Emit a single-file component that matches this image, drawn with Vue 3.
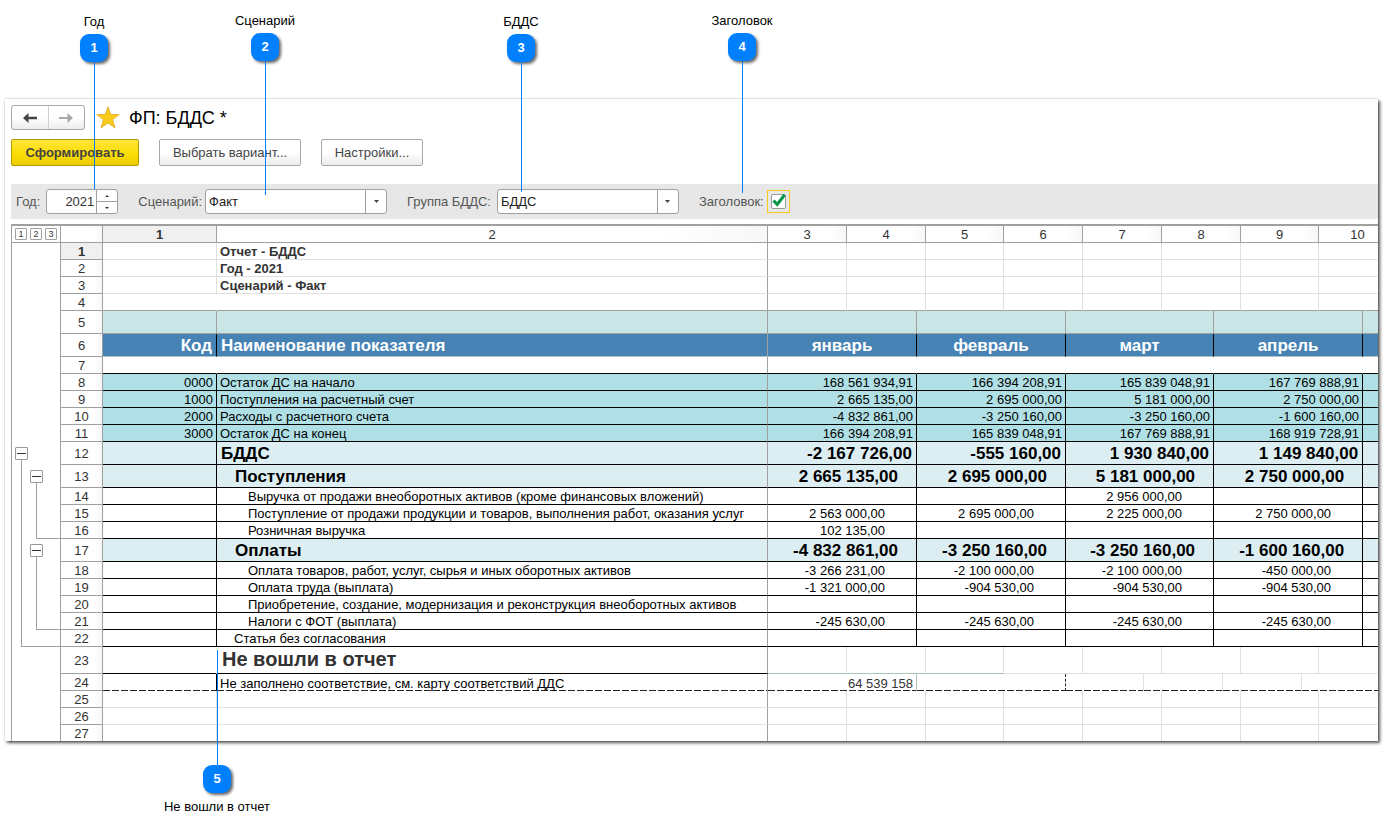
<script setup>
import { computed, ref } from 'vue'

const year = ref('2021')
const scenario = ref('Факт')
const group = ref('БДДС')
const showTitle = ref(true)

const stepYear = (delta) => {
  year.value = String(Number(year.value) + delta)
}

const callouts = [
  { id: 1, label: 'Год', x: 94, y: 14, line: 127 },
  { id: 2, label: 'Сценарий', x: 265, y: 13, line: 134 },
  { id: 3, label: 'БДДС', x: 521, y: 14, line: 130 },
  { id: 4, label: 'Заголовок', x: 742, y: 13, line: 132 },
  { id: 5, label: 'Не вошли в отчет', x: 217, y: 650, line: 115, below: true },
]

// Column tracks: sheet columns 3–10 and the month blocks share one set of edges.
const tracks = [42, 114, 551, 79, 70, 9, 78, 62, 17, 61, 18, 52, 9, 18, 61, 17, 44]
const columns = [
  { n: 3, span: 1 },
  { n: 4, span: 2 },
  { n: 5, span: 1 },
  { n: 6, span: 2 },
  { n: 7, span: 2 },
  { n: 8, span: 3 },
  { n: 9, span: 2 },
  { n: 10, span: 2 },
]
const plainSpans = columns.map((c) => c.span)
const monthSpans = [2, 3, 4, 5, 1]
const noteSpans = [2, 3, 2, 3, 2, 3]

const row = (n, kind, name = '', values = [], code = '') => {
  const spans = ['title', 'gap', 'missed', 'empty', 'empty last'].includes(kind)
    ? plainSpans
    : kind === 'note'
      ? noteSpans
      : monthSpans
  return { n, kind, name, code, cells: spans.map((span, i) => ({ span, text: values[i] || '' })) }
}

const rows = [
  row(1, 'title', 'Отчет - БДДС'),
  row(2, 'title', 'Год - 2021'),
  row(3, 'title', 'Сценарий - Факт'),
  row(4, 'gap'),
  row(5, 'band'),
  row(6, 'head', 'Наименование показателя', ['январь', 'февраль', 'март', 'апрель'], 'Код'),
  row(7, 'blank'),
  row(8, 'total', 'Остаток ДС на начало', ['168 561 934,91', '166 394 208,91', '165 839 048,91', '167 769 888,91'], '0000'),
  row(9, 'total', 'Поступления на расчетный счет', ['2 665 135,00', '2 695 000,00', '5 181 000,00', '2 750 000,00'], '1000'),
  row(10, 'total', 'Расходы с расчетного счета', ['-4 832 861,00', '-3 250 160,00', '-3 250 160,00', '-1 600 160,00'], '2000'),
  row(11, 'total', 'Остаток ДС на конец', ['166 394 208,91', '165 839 048,91', '167 769 888,91', '168 919 728,91'], '3000'),
  row(12, 'group', 'БДДС', ['-2 167 726,00', '-555 160,00', '1 930 840,00', '1 149 840,00']),
  row(13, 'subgroup', 'Поступления', ['2 665 135,00', '2 695 000,00', '5 181 000,00', '2 750 000,00']),
  row(14, 'item', 'Выручка от продажи внеоборотных активов (кроме финансовых вложений)', ['', '', '2 956 000,00', '']),
  row(15, 'item', 'Поступление от продажи продукции и товаров, выполнения работ, оказания услуг', ['2 563 000,00', '2 695 000,00', '2 225 000,00', '2 750 000,00']),
  row(16, 'item', 'Розничная выручка', ['102 135,00']),
  row(17, 'subgroup', 'Оплаты', ['-4 832 861,00', '-3 250 160,00', '-3 250 160,00', '-1 600 160,00']),
  row(18, 'item', 'Оплата товаров, работ, услуг, сырья и иных оборотных активов', ['-3 266 231,00', '-2 100 000,00', '-2 100 000,00', '-450 000,00']),
  row(19, 'item', 'Оплата труда (выплата)', ['-1 321 000,00', '-904 530,00', '-904 530,00', '-904 530,00']),
  row(20, 'item', 'Приобретение, создание, модернизация и реконструкция внеоборотных активов'),
  row(21, 'item', 'Налоги с ФОТ (выплата)', ['-245 630,00', '-245 630,00', '-245 630,00', '-245 630,00']),
  row(22, 'item outer', 'Статья без согласования'),
  row(23, 'missed', 'Не вошли в отчет'),
  row(24, 'note', 'Не заполнено соответствие, см. карту соответствий ДДС', ['64 539 158']),
  row(25, 'empty'),
  row(26, 'empty'),
  row(27, 'empty last'),
]

const heights = { band: 23, head: 23, group: 23, subgroup: 23, missed: 27 }
const heightOf = (r) => heights[r.kind] || 17
const bottomOf = (n) => rows.slice(0, n).reduce((sum, r) => sum + heightOf(r), 0)

const brackets = computed(() =>
  [
    { from: 12, to: 22, level: 0 },
    { from: 13, to: 16, level: 1 },
    { from: 17, to: 21, level: 1 },
  ].map((b) => ({
    ...b,
    left: 3 + b.level * 15,
    top: bottomOf(b.from) - 18,
    height: bottomOf(b.to) - bottomOf(b.from) + 18,
  })),
)
</script>

<template>
  <main class="stage">
    <section class="window">
      <header class="titlebar">
        <div class="nav">
          <button type="button" aria-label="Назад">
            <svg width="14" height="10" viewBox="0 0 14 10"><path d="M0 5L5.5 0V3.8H14V6.2H5.5V10Z" fill="#444" /></svg>
          </button>
          <button type="button" aria-label="Вперед">
            <svg width="14" height="10" viewBox="0 0 14 10"><path d="M14 5L8.5 0V4H0V6H8.5V10Z" fill="#aaa" /></svg>
          </button>
        </div>
        <svg class="star" width="24" height="23" viewBox="0 0 24 23"><path d="M12 1L14.8 8.6H23.2L16.6 13.6L19 21.8L12 17L5 21.8L7.4 13.6L0.8 8.6H9.2Z" fill="#f9cb1c" stroke="#e5b52a" stroke-width="1" /></svg>
        <h1>ФП: БДДС *</h1>
      </header>

      <div class="actions">
        <button type="button" class="btn primary">Сформировать</button>
        <button type="button" class="btn variant">Выбрать вариант...</button>
        <button type="button" class="btn settings">Настройки...</button>
      </div>

      <form class="filters" @submit.prevent>
        <div class="field">
          <label for="year">Год:</label>
          <div class="box year">
            <input id="year" v-model="year" type="text" inputmode="numeric" />
            <div class="stepper">
              <button type="button" aria-label="Больше" @click="stepYear(1)"><svg width="4" height="2" viewBox="0 0 4 2"><path d="M0 2L2 0L4 2Z" fill="#333" /></svg></button>
              <button type="button" aria-label="Меньше" @click="stepYear(-1)"><svg width="4" height="2" viewBox="0 0 4 2"><path d="M0 0L2 2L4 0Z" fill="#333" /></svg></button>
            </div>
          </div>
        </div>
        <div class="field tight">
          <label for="scenario">Сценарий:</label>
          <div class="box combo">
            <select id="scenario" v-model="scenario"><option>Факт</option></select>
            <span class="drop"><svg width="5" height="3" viewBox="0 0 5 3"><path d="M0 0H5L2.5 3Z" fill="#444" /></svg></span>
          </div>
        </div>
        <div class="field">
          <label for="group">Группа БДДС:</label>
          <div class="box combo">
            <select id="group" v-model="group"><option>БДДС</option></select>
            <span class="drop"><svg width="5" height="3" viewBox="0 0 5 3"><path d="M0 0H5L2.5 3Z" fill="#444" /></svg></span>
          </div>
        </div>
        <div class="field tight">
          <label for="show-title">Заголовок:</label>
          <div class="check">
            <input id="show-title" v-model="showTitle" type="checkbox" />
            <svg v-if="showTitle" width="17" height="15" viewBox="0 0 17 15"><path d="M3.5 6.5L7.2 10.5L14.5 1" fill="none" stroke="#009646" stroke-width="3" /></svg>
          </div>
        </div>
      </form>

      <div class="sheet">
        <aside class="outline">
          <div class="levels">
            <button v-for="n in 3" :key="n" type="button">{{ n }}</button>
          </div>
          <div class="tree">
            <div
              v-for="b in brackets"
              :key="b.from"
              class="bracket"
              :style="{ left: b.left + 'px', top: b.top + 'px', height: b.height + 'px' }"
            >
              <button type="button" aria-label="Свернуть"></button>
              <span class="rail"></span>
            </div>
          </div>
        </aside>

        <div class="grid">
          <table>
            <colgroup>
              <col v-for="(w, i) in tracks" :key="i" :style="{ width: w + 'px' }" />
              <col />
            </colgroup>
            <thead>
              <tr>
                <th></th>
                <th class="current">1</th>
                <th>2</th>
                <th v-for="c in columns" :key="c.n" :colspan="c.span">{{ c.n }}</th>
              </tr>
            </thead>
            <tbody>
              <tr v-for="r in rows" :key="r.n" :class="r.kind">
                <th scope="row" :class="{ current: r.n === 1 }">{{ r.n }}</th>
                <td class="code">{{ r.code }}</td>
                <td class="name">{{ r.name }}</td>
                <td v-for="(c, i) in r.cells" :key="i" class="value" :colspan="c.span">{{ c.text }}</td>
              </tr>
            </tbody>
          </table>
        </div>
      </div>
    </section>

    <div
      v-for="c in callouts"
      :key="c.id"
      class="callout"
      :class="{ below: c.below }"
      :style="{ left: c.x - 60 + 'px', top: c.y + 'px' }"
    >
      <span class="caption">{{ c.label }}</span>
      <span class="badge">{{ c.id }}</span>
      <span class="line" :style="{ height: c.line + 'px' }"></span>
    </div>
  </main>
</template>

<style>
body {
  margin: 0;
  background: #fff;
}
</style>

<style scoped>
.stage {
  position: relative;
  box-sizing: border-box;
  min-height: 100vh;
  padding: 99px 9px 88px 5px;
  overflow: hidden;
  font-family: "Liberation Sans", Arial, sans-serif;
  font-size: 13px;
  color: #333;
}

button,
input,
select {
  margin: 0;
  padding: 0;
  border: 0;
  background: none;
  font: inherit;
  color: inherit;
}

svg {
  display: block;
}

.window {
  padding: 6px 0 0 6px;
  background: #fff;
  box-shadow: 0 0 2px rgba(0, 0, 0, 0.25), 2px 2px 3px rgba(0, 0, 0, 0.65);
}

.titlebar {
  display: flex;
  align-items: center;
  height: 25px;
}

.nav {
  display: flex;
  box-sizing: border-box;
  width: 74px;
  height: 25px;
  border: 1px solid #a8a8a8;
  border-radius: 3px;
  background: linear-gradient(#fff 50%, #ececec);
}

.nav button {
  display: flex;
  flex: 1;
  align-items: center;
  justify-content: center;
}

.nav button + button {
  border-left: 1px solid #d0d0d0;
}

.star {
  margin-left: 11px;
}

h1 {
  margin: 0 0 0 9px;
  font-size: 18px;
  font-weight: 400;
  line-height: 24px;
  color: #000;
}

.actions {
  display: flex;
  gap: 20px;
  margin-top: 9px;
}

.btn {
  box-sizing: border-box;
  height: 27px;
  border: 1px solid #a8a8a8;
  border-radius: 2px;
  background: linear-gradient(#fff 50%, #ececec);
  color: #444;
}

.primary {
  width: 128px;
  border-color: #b09a00;
  background: linear-gradient(#ffe63a, #fbdc00 60%, #eccb00);
  font-weight: 700;
}

.variant {
  width: 142px;
}

.settings {
  width: 102px;
}

.filters {
  display: flex;
  align-items: center;
  gap: 20px;
  height: 35px;
  margin-top: 18px;
  padding-left: 5px;
  background: #e7e7e7;
}

.field {
  display: flex;
  align-items: center;
  gap: 6px;
}

.tight {
  gap: 3px;
}

.field label {
  color: #555;
}

.box {
  box-sizing: border-box;
  height: 25px;
  border: 1px solid #a0a0a0;
  border-radius: 3px;
  background: #fff;
}

.year {
  display: flex;
  width: 72px;
}

.year input {
  width: 49px;
  padding-right: 2px;
  box-sizing: border-box;
  text-align: right;
}

.stepper {
  display: flex;
  flex: 1;
  flex-direction: column;
  border-left: 1px solid #a0a0a0;
}

.stepper button {
  display: flex;
  flex: 1;
  align-items: center;
  justify-content: center;
}

.stepper button + button {
  border-top: 1px solid #a0a0a0;
}

.combo {
  display: grid;
  grid-template-columns: 1fr 21px;
  width: 182px;
}

.combo select {
  grid-area: 1 / 1 / 2 / 3;
  padding-left: 3px;
  appearance: none;
  color: #222;
}

.drop {
  display: flex;
  grid-area: 1 / 2 / 2 / 3;
  align-items: center;
  justify-content: center;
  border-left: 1px solid #a0a0a0;
  pointer-events: none;
}

.check {
  display: grid;
  box-sizing: border-box;
  width: 23px;
  height: 23px;
  place-items: center;
  border: 1px solid #fbc91c;
}

.check input {
  grid-area: 1 / 1;
  box-sizing: border-box;
  width: 15px;
  height: 15px;
  border: 1px solid #999;
  border-radius: 2px;
  background: #fff;
  appearance: none;
}

.check svg {
  grid-area: 1 / 1;
  pointer-events: none;
}

.sheet {
  display: flex;
  margin-top: 5px;
  border-top: 2px solid #a0a0a0;
  border-left: 1px solid #a0a0a0;
}

.outline {
  display: flex;
  flex: none;
  flex-direction: column;
  width: 48px;
  border-right: 1px solid #a0a0a0;
}

.levels {
  display: flex;
  box-sizing: border-box;
  gap: 3px;
  height: 17px;
  padding: 2px 3px;
  border-bottom: 1px solid #a0a0a0;
}

.levels button {
  box-sizing: border-box;
  width: 12px;
  height: 12px;
  border: 1px solid #a0a0a0;
  border-radius: 1px;
  font-size: 9px;
  line-height: 10px;
}

.tree {
  position: relative;
  flex: 1;
}

.bracket {
  position: absolute;
  right: 0;
  display: flex;
  flex-direction: column;
}

.bracket button {
  display: flex;
  flex: none;
  align-items: center;
  justify-content: center;
  box-sizing: border-box;
  width: 13px;
  height: 13px;
  border: 1px solid #999;
  border-radius: 1px;
}

.bracket button::before {
  width: 9px;
  height: 1px;
  background: #333;
  content: "";
}

.rail {
  flex: 1;
  margin-left: 6px;
  border-bottom: 1px solid #a0a0a0;
  border-left: 1px solid #a0a0a0;
}

.grid {
  flex: 1;
  min-width: 0;
  overflow: hidden;
}

table {
  width: calc(100% + 19px);
  border-collapse: separate;
  border-spacing: 0;
  table-layout: fixed;
}

th,
td {
  box-sizing: border-box;
  height: 17px;
  padding: 2px 3px 0;
  overflow: hidden;
  border: 0 solid #e0e0e0;
  border-width: 0 1px 1px 0;
  line-height: 14px;
  white-space: nowrap;
}

th {
  border-color: #a0a0a0;
  background: linear-gradient(90deg, #fff 80%, #f7f7f7);
  font-weight: 400;
  text-align: center;
}

th.current {
  background: #f0f0f0;
  font-weight: 700;
}

td.code,
td.value {
  text-align: right;
}

td.name {
  border-right-color: #a0a0a0;
}

.title td.name {
  font-weight: 700;
}

.gap td {
  border-bottom-color: #a0a0a0;
}

.gap td.code {
  border-right-color: transparent;
}

.band td {
  height: 23px;
  border-color: #a0a0a0;
  background: #cae5e5;
}

.head td {
  height: 23px;
  border-color: #000;
  border-bottom-color: #a9c4c2;
  background: #4682b4;
  color: #fff;
  font-size: 17px;
  font-weight: 700;
  line-height: 20px;
}

.head td.code,
.head td.name,
.group td,
.subgroup td {
  padding-right: 4px;
  padding-left: 4px;
}

.head td.value {
  text-align: center;
}

.blank td {
  border-right-color: transparent;
  border-bottom-color: #000;
}

.total td,
.group td,
.subgroup td,
.item td {
  border-color: #000;
  color: #000;
}

.total td {
  background: #b0e0e6;
}

.group td,
.subgroup td {
  height: 23px;
  background: #dceef2;
  font-size: 17px;
  font-weight: 700;
  line-height: 20px;
}

.subgroup td.name {
  padding-left: 18px;
}

.subgroup td.value {
  padding-right: 18px;
}

.item td.name {
  padding-left: 31px;
}

.item td.value {
  padding-right: 31px;
}

.outer td.name {
  padding-left: 17px;
}

.head td.name,
.blank td.name,
.total td.name,
.group td.name,
.subgroup td.name,
.item td.name {
  border-right-color: #a0a0a0;
}

.missed th {
  height: 27px;
}

.missed td {
  height: 27px;
  border-bottom-color: #e0e0e0;
}

.missed td.code,
.missed td.name {
  border-bottom-color: #000;
}

.missed td.code {
  border-right-color: transparent;
}

.missed td.name {
  padding: 0 5px 2px;
  font-size: 20px;
  font-weight: 700;
  line-height: 24px;
}

.missed td:nth-child(4),
.missed td:nth-child(5),
.missed td:nth-child(6) {
  border-bottom-color: #a9c4b8;
}

.note td {
  border-bottom: 0;
  background: repeating-linear-gradient(90deg, #222 0 7px, transparent 7px 9px) bottom / 100% 1px no-repeat;
}

.note td.code,
.note td.name {
  color: #000;
}

.note td.code {
  border-right-color: #000;
}

.note td:nth-child(4) {
  border-right-color: #a9c4b8;
}

.note td:nth-child(5) {
  border-right: 1px dashed #222;
}

.last th,
.last td {
  height: 16px;
  border-bottom: 0;
}

.callout {
  position: absolute;
  display: flex;
  flex-direction: column;
  align-items: center;
  width: 120px;
  color: #000;
  pointer-events: none;
}

.caption {
  height: 20px;
  line-height: 15px;
  white-space: nowrap;
}

.badge {
  width: 28px;
  height: 28px;
  border-radius: 9px;
  background: #0080ff;
  box-shadow: 2px 2px 3px rgba(0, 0, 0, 0.6);
  color: #fff;
  font-weight: 700;
  line-height: 28px;
  text-align: center;
}

.line {
  width: 1px;
  margin-left: 1px;
  background: #0080ff;
}

.below {
  flex-direction: column-reverse;
}

.below .caption {
  height: auto;
  margin-top: 6px;
}
</style>
